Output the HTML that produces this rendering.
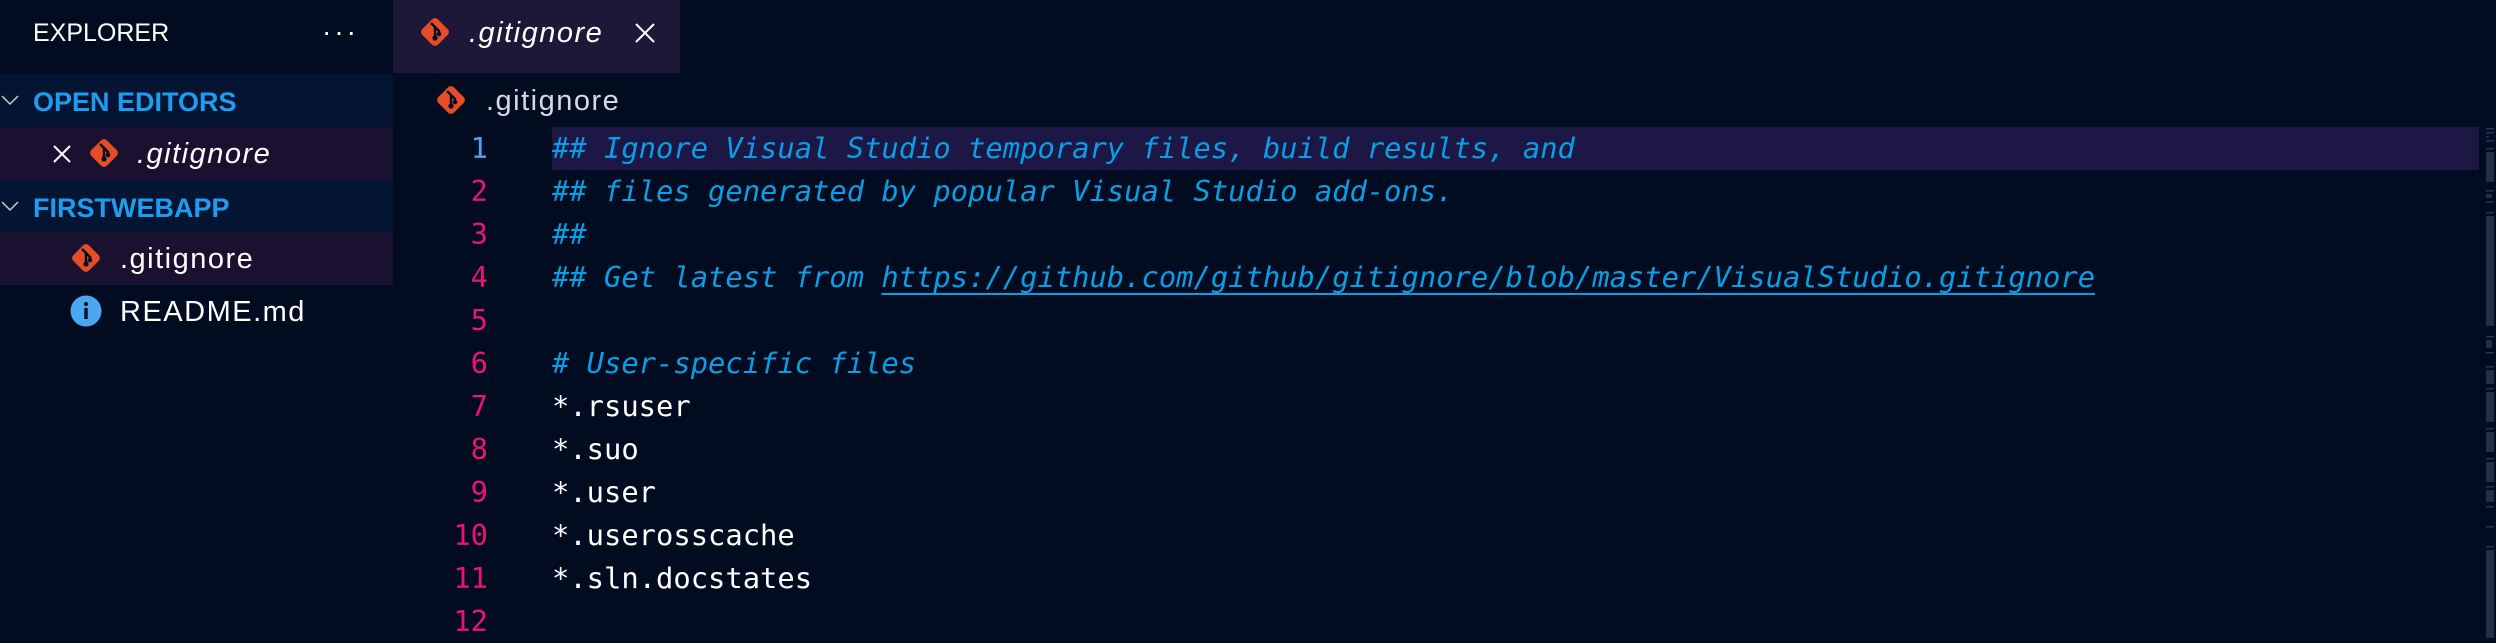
<!DOCTYPE html>
<html><head><meta charset="utf-8"><style>
*{margin:0;padding:0;box-sizing:border-box}
body{width:2496px;height:640px;background:#020c20;position:relative;overflow:hidden;font-family:"Liberation Sans",sans-serif;color:#fff}
.a{position:absolute;white-space:pre}
.ui{font-size:29px;line-height:1;letter-spacing:1.5px}
.mono{font-family:"DejaVu Sans Mono","Liberation Mono",monospace;font-size:28.8px;line-height:43px}
.c{color:#0a9ee6;font-style:italic}
</style></head><body>
<svg width="0" height="0" style="position:absolute"><defs>
<g id="git"><rect x="5" y="5" width="22" height="22" rx="4" transform="rotate(45 16 16)" fill="#e44d26"/>
<path d="M12 7 L20 15 M16 11 V22 M16 11 L20 15 V18" stroke="#020c20" stroke-width="2.4" fill="none"/><circle cx="16" cy="22" r="2.6" fill="#020c20"/><circle cx="20" cy="18" r="2.3" fill="#020c20"/></g>
</defs></svg>
<div class="a" style="left:0;top:0;width:393px;height:640px;background:#020c20"></div>
<div class="a" style="left:33px;top:19px;font-size:25px">EXPLORER</div>
<div class="a" style="left:322px;top:16px;font-size:28px;letter-spacing:3px">···</div>
<div class="a" style="left:0;top:74px;width:393px;height:53px;background:#031533"></div>
<div class="a" style="left:0;top:127px;width:393px;height:53px;background:#1a1130"></div>
<div class="a" style="left:0;top:180px;width:393px;height:52px;background:#031533"></div>
<div class="a" style="left:0;top:232px;width:393px;height:53px;background:#1a1130"></div>
<svg class="a" style="left:0;top:92px" width="20" height="16"><path d="M2 4 L10 12 L18 4" stroke="#ccc" stroke-width="1.5" fill="none"/></svg>
<svg class="a" style="left:0;top:198px" width="20" height="16"><path d="M2 4 L10 12 L18 4" stroke="#ccc" stroke-width="1.5" fill="none"/></svg>
<div class="a" style="left:33px;top:87px;font-weight:bold;color:#1f9cf0;font-size:27px">OPEN EDITORS</div>
<div class="a" style="left:33px;top:193px;font-weight:bold;color:#1f9cf0;font-size:27px">FIRSTWEBAPP</div>
<svg class="a" style="left:51px;top:143px" width="22" height="22"><path d="M3 3 L19 19 M19 3 L3 19" stroke="#fff" stroke-width="2"/></svg>
<svg class="a" style="left:88px;top:137px" width="32" height="32"><use href="#git"/></svg>
<div class="a ui" style="left:137px;top:140px;font-style:italic">.gitignore</div>
<svg class="a" style="left:70px;top:242px" width="32" height="32"><use href="#git"/></svg>
<div class="a ui" style="left:120px;top:245px">.gitignore</div>
<svg class="a" style="left:70px;top:295px" width="32" height="32"><circle cx="16" cy="16" r="15.5" fill="#4aa8f0"/><rect x="14.3" y="13" width="3.4" height="11" fill="#020c20"/><circle cx="16" cy="9" r="2.1" fill="#020c20"/></svg>
<div class="a ui" style="left:120px;top:298px">README.md</div>
<div class="a" style="left:393px;top:0;width:287px;height:73px;background:#1d1738"></div>
<svg class="a" style="left:419px;top:16px" width="32" height="32"><use href="#git"/></svg>
<div class="a ui" style="left:469px;top:19px;font-style:italic">.gitignore</div>
<svg class="a" style="left:634px;top:22px" width="22" height="22"><path d="M2 2 L20 20 M20 2 L2 20" stroke="#fff" stroke-width="2"/></svg>
<svg class="a" style="left:435px;top:84px" width="32" height="32"><use href="#git"/></svg>
<div class="a ui" style="left:486px;top:87px;color:#d8d8e0">.gitignore</div>
<div class="a" style="left:552px;top:127px;width:1927px;height:43px;background:#1d1745"></div>
<div class="a mono" style="left:388px;top:127px;width:100px;text-align:right"><span style="color:#4aa3f0">1</span>
<span style="color:#ec1278">2
3
4
5
6
7
8
9
10
11
12</span></div>
<div class="a mono" style="left:552px;top:127px"><span class="c">## Ignore Visual Studio temporary files, build results, and</span>
<span class="c">## files generated by popular Visual Studio add-ons.</span>
<span class="c">##</span>
<span class="c">## Get latest from <span style="text-decoration:underline;text-underline-offset:6px">https://github.com/github/gitignore/blob/master/VisualStudio.gitignore</span></span>

<span class="c"># User-specific files</span>
*.rsuser
*.suo
*.user
*.userosscache
*.sln.docstates
</div>
<svg class="a" style="left:2486px;top:126px;opacity:0.45" width="10" height="514">
<g fill="#3a6aa0">
<rect x="0" y="2" width="8" height="1.5"/><rect x="0" y="6" width="8" height="1.5"/><rect x="0" y="10" width="3" height="1.5"/><rect x="0" y="14" width="8" height="1.5"/>
<rect x="0" y="22" width="8" height="1.5"/><rect x="0" y="64" width="8" height="1.5"/><rect x="0" y="75" width="8" height="1.5"/><rect x="0" y="86" width="8" height="1.5"/>
<rect x="0" y="210" width="8" height="1.5"/><rect x="0" y="226" width="8" height="1.5"/><rect x="0" y="240" width="8" height="1.5"/><rect x="0" y="262" width="8" height="1.5"/><rect x="0" y="302" width="8" height="1.5"/><rect x="0" y="332" width="8" height="1.5"/><rect x="0" y="360" width="8" height="1.5"/><rect x="0" y="380" width="8" height="1.5"/><rect x="0" y="400" width="8" height="1.5"/><rect x="0" y="420" width="8" height="1.5"/>
</g>
<g fill="#8090a8" opacity="0.6">
<rect x="0" y="26" width="8" height="30"/><rect x="0" y="68" width="6" height="4"/><rect x="0" y="90" width="8" height="110"/><rect x="0" y="214" width="6" height="8"/><rect x="0" y="244" width="8" height="14"/><rect x="0" y="266" width="8" height="30"/><rect x="0" y="306" width="8" height="20"/><rect x="0" y="336" width="8" height="20"/><rect x="0" y="364" width="8" height="12"/><rect x="0" y="424" width="8" height="88"/>
</g></svg>
</body></html>
